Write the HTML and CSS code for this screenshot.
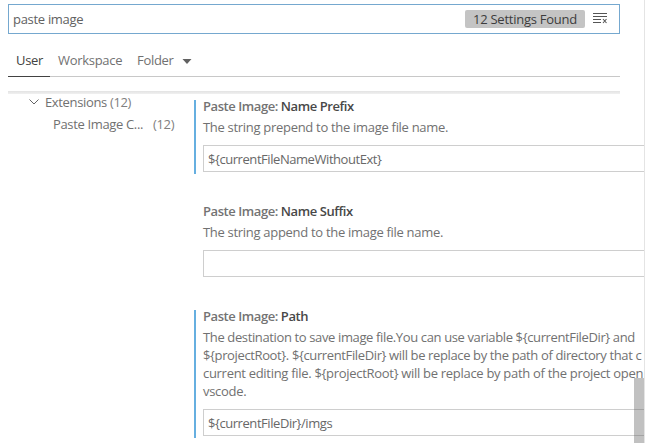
FILE: index.html
```
<!DOCTYPE html>
<html lang="en">
<head>
<meta charset="utf-8">
<title>Settings</title>
<link rel="stylesheet" href="styles.css">
</head>
<body>
<main class="editor">
  <header class="header">
    <div class="search">
      <span class="query">paste image</span>
      <span class="count">12 Settings Found</span>
      <svg class="clear" width="16" height="12" viewBox="0 0 16 12" fill="none" stroke="#555"><path d="M1 1.5h14M1 4.5h14M1 7.5h8M1 10.5h8"/><path d="M11 7l3.500 4M14.500 7L11 11" stroke-width="1.1"/></svg>
    </div>
    <nav class="tabs">
      <span class="tab active">User</span>
      <span class="tab workspace">Workspace</span>
      <span class="tab folder">Folder</span>
      <svg class="caret" width="10" height="5" viewBox="0 0 10 5"><path d="M.5 0h9L5 5z" fill="#616161"/></svg>
    </nav>
    <div class="shadow"></div>
  </header>
  <div class="body">
    <aside class="toc">
      <div class="group"><svg class="chevron" width="10" height="6" viewBox="0 0 10 6" fill="none" stroke="#646465"><path d="M.5 .5L5 5L9.500 .5"/></svg><span class="group-name">Extensions <span class="num">(12)</span></span></div>
      <div class="item"><span class="item-name">Paste Image C...</span><span class="num">(12)</span></div>
    </aside>
    <div class="settings">
      <section class="setting modified">
        <h2><span class="category">Paste Image:</span> Name Prefix</h2>
        <p>The string prepend to the image file name.</p>
        <div class="input">${currentFileNameWithoutExt}</div>
      </section>
      <section class="setting">
        <h2><span class="category">Paste Image:</span> Name Suffix</h2>
        <p>The string append to the image file name.</p>
        <div class="input"></div>
      </section>
      <section class="setting modified">
        <h2><span class="category">Paste Image:</span> Path</h2>
        <p><span class="tight">The destination to save image file.You can use variable ${currentFileDir} and</span><br><span class="tight">${projectRoot}. ${currentFileDir} will be replace by the path of directory that c</span><br><span class="snug">current editing file. ${projectRoot} will be replace by path of the project open</span><br>vscode.</p>
        <div class="input">${currentFileDir}/imgs</div>
      </section>
    </div>
  </div>
  <div class="scrollbar"></div>
</main>
</body>
</html>
```
FILE: styles.css
```
* { box-sizing: border-box; }
body {
  margin: 0;
  background: #fff;
  color: #717171;
  font: 13px/18px "Open Sans", "Noto Sans", sans-serif;
  letter-spacing: -0.3px;
}
.editor {
  position: relative;
  width: 645px;
  height: 443px;
  overflow: hidden;
  border-right: 1px solid #e4e4e4;
}
.header { width: 612px; margin-left: 8px; padding-top: 4px; }
.search {
  display: flex;
  align-items: center;
  height: 30px;
  padding: 0 11px 0 4px;
  border: 1px solid #75a8cf;
}
.query { flex: 1; color: #616161; }
.count {
  width: 120px;
  height: 18px;
  border-radius: 2px;
  background: #c4c4c4;
  color: #3c3c3c;
  text-align: center;
  white-space: nowrap;
  line-height: 19px;
  letter-spacing: -0.25px;
}
.clear { margin: -3px 0 0 7px; }
.tabs {
  display: flex;
  align-items: center;
  height: 43px;
  border-bottom: 1px solid #c8c8c8;
}
.tab { height: 43px; line-height: 53px; }
.active { width: 42px; padding-left: 8px; border-bottom: 1px solid #424242; color: #424242; }
.workspace { width: 79px; padding-left: 8px; }
.folder { width: 53px; padding-left: 8px; }
.caret { margin-top: 12px; }
.shadow { height: 3px; margin-top: 14px; background: linear-gradient(#e3e3e3, #f0f0f0); }
.body { display: flex; height: 349px; }
.toc { width: 194px; flex: none; white-space: nowrap; letter-spacing: -0.35px; }
.group { display: flex; align-items: center; height: 16px; padding-left: 29px; }
.chevron { margin-right: 6px; }
.num { color: #808080; }
.item { display: flex; margin-top: 5px; padding-left: 53px; }
.item-name { width: 100px; }
.settings { flex: none; width: 500px; padding-top: 6px; }
.setting { padding-left: 9px; margin-bottom: 31px; height: 74px; white-space: nowrap; }
.modified { border-left: 2px solid #66afe0; padding-left: 7px; }
.setting:last-child { height: 128px; }
h2 { margin: 0; height: 18px; font-size: 13px; line-height: 12px; font-weight: 600; color: #484848; letter-spacing: -.43px; }
.category { color: #737373; }
p { margin: 0; }
.tight { letter-spacing: -.37px; }
.snug { letter-spacing: -.3px; }
.input { height: 27px; margin-top: 9px; padding: 0 4px; border: 1px solid #cecece; line-height: 27px; color: #686868; letter-spacing: -.44px; }
.scrollbar { position: absolute; right: 0; bottom: 0; width: 10px; height: 65px; background: rgba(100,100,100,.4); }
```
